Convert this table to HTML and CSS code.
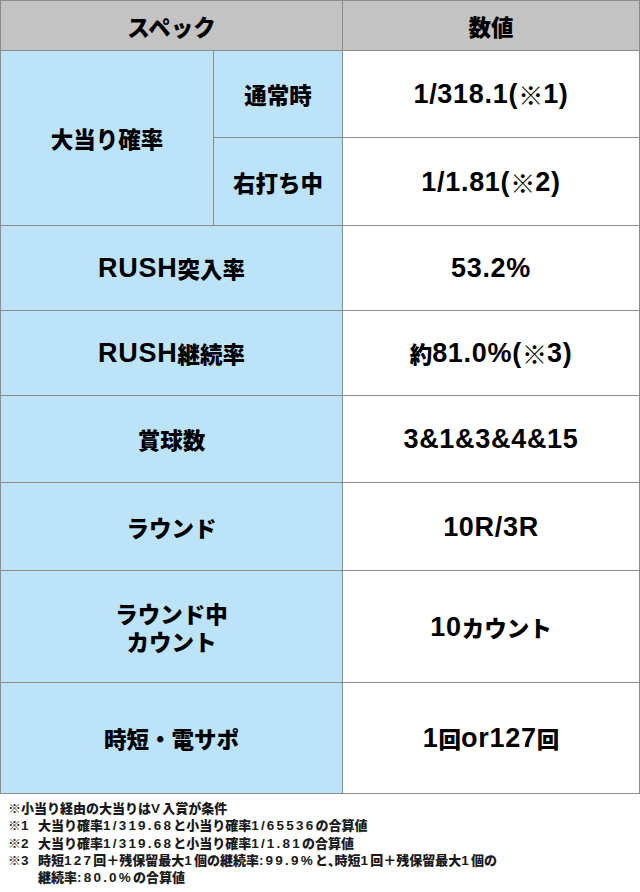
FILE: index.html
```html
<!DOCTYPE html>
<html lang="ja">
<head>
<meta charset="utf-8">
<link rel="stylesheet" href="styles.css">
</head>
<body>
<div class="spec">
  <div class="cell head span2">スペック</div>
  <div class="cell head">数値</div>

  <div class="cell label rows2">大当り確率</div>
  <div class="cell label">通常時</div>
  <div class="cell val"><span class="n">1/318.1(</span><span class="k">※</span><span class="n">1)</span></div>
  <div class="cell label">右打ち中</div>
  <div class="cell val"><span class="n">1/1.81(</span><span class="k">※</span><span class="n">2)</span></div>

  <div class="cell label span2"><span class="n">RUSH</span>突入率</div>
  <div class="cell val"><span class="n">53.2%</span></div>

  <div class="cell label span2"><span class="n">RUSH</span>継続率</div>
  <div class="cell val">約<span class="n">81.0%(</span><span class="k">※</span><span class="n">3)</span></div>

  <div class="cell label span2">賞球数</div>
  <div class="cell val"><span class="n">3&amp;1&amp;3&amp;4&amp;15</span></div>

  <div class="cell label span2">ラウンド</div>
  <div class="cell val"><span class="n">10R/3R</span></div>

  <div class="cell label span2">ラウンド中<br>カウント</div>
  <div class="cell val"><span class="n">10</span>カウント</div>

  <div class="cell label span2">時短・電サポ</div>
  <div class="cell val"><span class="n">1</span>回<span class="n">or127</span>回</div>
</div>

<div class="notes">
  <p class="note">※小当り経由の大当りは<span class="d">V</span>入賞が条件</p>
  <div class="note item"><span class="mark">※<span class="d">1</span></span><span class="txt">大当り確率<span class="d">1/319.68</span>と小当り確率<span class="d">1/65536</span>の合算値</span></div>
  <div class="note item"><span class="mark">※<span class="d">2</span></span><span class="txt">大当り確率<span class="d">1/319.68</span>と小当り確率<span class="d">1/1.81</span>の合算値</span></div>
  <div class="note item"><span class="mark">※<span class="d">3</span></span><span class="txt">時短<span class="d">127</span>回＋残保留最大<span class="d">1</span>個の継続率<span class="d">:99.9%</span>と<span class="p">、</span>時短<span class="d">1</span>回＋残保留最大<span class="d">1</span>個の<br>継続率<span class="d">:80.0%</span>の合算値</span></div>
</div>
</body>
</html>
```

FILE: styles.css
```css
html, body {
  margin: 0;
  padding: 0;
  background: #ffffff;
}

body {
  width: 640px;
  font-family: "Noto Sans CJK JP", "Liberation Sans", sans-serif;
  color: #000;
}

.spec {
  display: grid;
  grid-template-columns: 212px 128px 296px;
  grid-template-rows: 49px 86px 87px 84px 84px 86px 87px 111px 110px;
  gap: 1px;
  padding: 1px;
  background: #8c8c8c;
  width: 638px;
}

.cell {
  display: flex;
  align-items: center;
  justify-content: center;
  text-align: center;
  font-weight: 900;
  font-size: 22.5px;
  line-height: 28px;
  background: #ffffff;
}

.head {
  background: #c3c3c3;
}

.label {
  background: #bce3f8;
}

.span2 {
  grid-column: 1 / span 2;
}

.rows2 {
  grid-row: 2 / span 2;
}

.n {
  font-family: "Liberation Sans", sans-serif;
  font-size: 27px;
  font-weight: 700;
  letter-spacing: 0.7px;
}

.k {
  font-family: "Noto Sans CJK JP", sans-serif;
  font-weight: 400;
  font-size: 25px;
}

.notes {
  padding: 6px 0 0 8px;
  font-size: 13px;
  line-height: 16.3px;
  font-weight: 900;
  color: #1a1a1a;
}

.d {
  font-family: "Liberation Sans", sans-serif;
  font-weight: 700;
  font-size: 13.5px;
  letter-spacing: 2.2px;
}

.p {
  font-feature-settings: "halt";
}

.note {
  margin: 0;
}

.item {
  display: flex;
}

.mark {
  width: 30px;
  flex: none;
}

.txt {
  flex: 1;
  white-space: nowrap;
}
```
